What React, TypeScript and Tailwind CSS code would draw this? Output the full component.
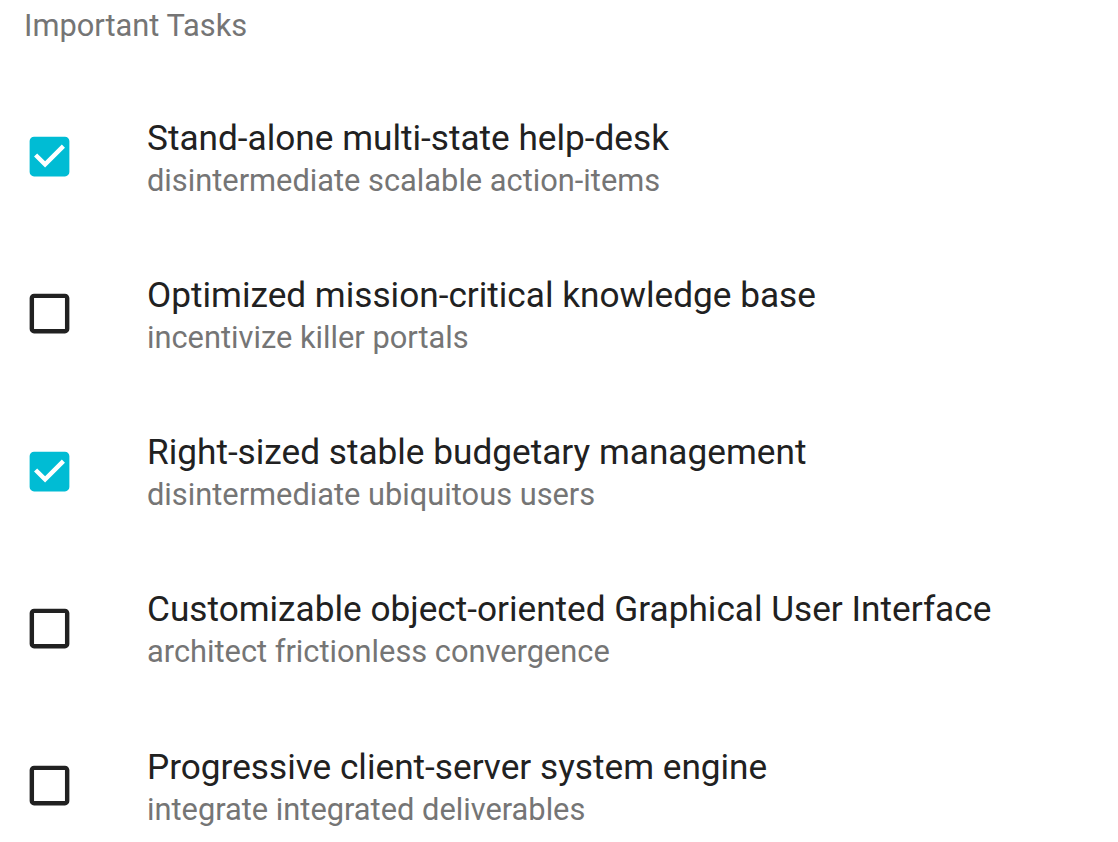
import { useState } from 'react'

interface Task {
  title: string
  detail: string
  done: boolean
}

const initialTasks: Task[] = [
  { title: 'Stand-alone multi-state help-desk', detail: 'disintermediate scalable action-items', done: true },
  { title: 'Optimized mission-critical knowledge base', detail: 'incentivize killer portals', done: false },
  { title: 'Right-sized stable budgetary management', detail: 'disintermediate ubiquitous users', done: true },
  {
    title: 'Customizable object-oriented Graphical User Interface',
    detail: 'architect frictionless convergence',
    done: false
  },
  { title: 'Progressive client-server system engine', detail: 'integrate integrated deliverables', done: false }
]

function CheckIcon({ checked }: { checked: boolean }): React.JSX.Element {
  return (
    <svg viewBox="0 0 24 24" className="h-[53px] w-[53px]">
      {checked ? (
        <path
          fill="#00bcd4"
          d="M19 3H5c-1.11 0-2 .9-2 2v14c0 1.1.89 2 2 2h14c1.11 0 2-.9 2-2V5c0-1.1-.89-2-2-2zm-9 14l-5-5 1.41-1.41L10 14.17l7.59-7.59L19 8l-9 9z"
        />
      ) : (
        <path
          fill="#212121"
          d="M19 5v14H5V5h14m0-2H5c-1.1 0-2 .9-2 2v14c0 1.1.9 2 2 2h14c1.1 0 2-.9 2-2V5c0-1.1-.9-2-2-2z"
        />
      )}
    </svg>
  )
}

export default function App(): React.JSX.Element {
  const [tasks, setTasks] = useState(initialTasks)

  const toggle = (i: number): void =>
    setTasks((ts) => ts.map((t, j) => (j === i ? { ...t, done: !t.done } : t)))

  return (
    <div className="h-[842px] w-[1118px] overflow-hidden bg-white font-['Roboto',sans-serif]">
      <div className="flex h-[78px] items-start pl-[24px] pt-[7px] text-[30.8px] leading-[38px] text-[#757575]">
        Important Tasks
      </div>
      <ul>
        {tasks.map((t, i) => (
          <li
            key={t.title}
            className="flex h-[157.25px] cursor-pointer items-center"
            onClick={() => toggle(i)}
          >
            <div className="flex w-[147px] shrink-0 items-center pl-[23px]">
              <CheckIcon checked={t.done} />
            </div>
            <div className="flex flex-col pt-[3px]">
              <span className="text-[35.2px] leading-[40px] text-[#212121]">{t.title}</span>
              <span className="mt-[5px] text-[30.8px] leading-[36px] text-[#757575]">{t.detail}</span>
            </div>
          </li>
        ))}
      </ul>
    </div>
  )
}
